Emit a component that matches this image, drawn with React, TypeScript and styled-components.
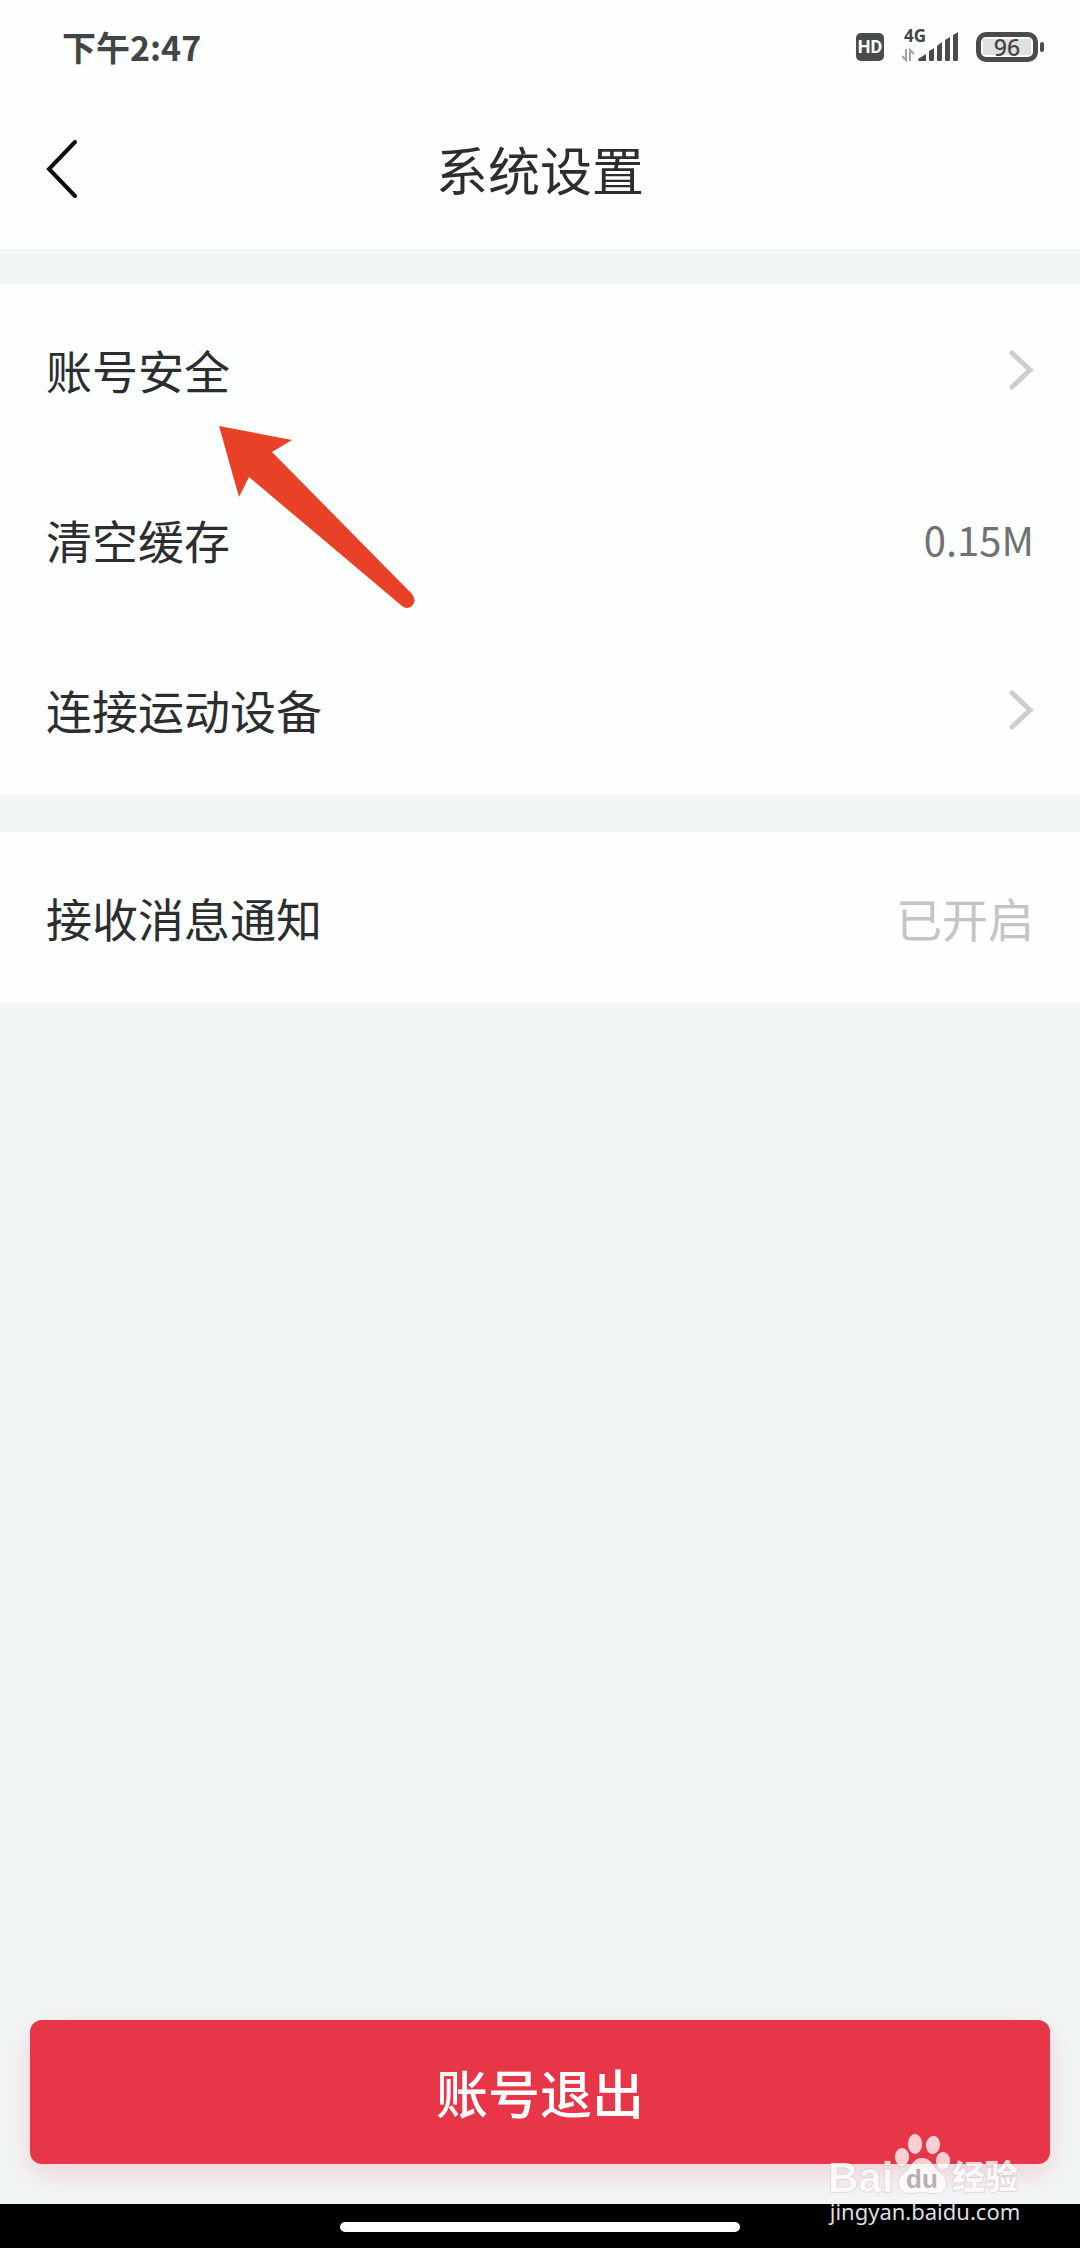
import React from "react";
import styled, { createGlobalStyle } from "styled-components";

const GlobalStyle = createGlobalStyle`
  * { box-sizing: border-box; }
  body {
    margin: 0;
    background: #f2f6f7;
    font-family: "Noto Sans CJK SC", "Noto Sans", sans-serif;
    color: #2c2d2f;
  }
  button { font: inherit; color: inherit; border: 0; background: none; padding: 0; cursor: pointer; }
`;

const Screen = styled.div`
  position: relative;
  display: flex;
  flex-direction: column;
  min-height: 100vh;
  background: #f2f6f7;
`;

const StatusBar = styled.div`
  display: flex;
  align-items: center;
  justify-content: space-between;
  height: 94px;
  padding: 0 36px 0 62px;
  background: #fdfefe;
  color: #434446;
`;

const Time = styled.time`
  font-size: 34px;
  line-height: 48px;
  font-weight: 700;
`;

const StatusIcons = styled.div`
  display: flex;
  align-items: center;
  gap: 18px;
`;

const HdBadge = styled.span`
  display: flex;
  align-items: center;
  justify-content: center;
  width: 28px;
  height: 28px;
  border-radius: 5px;
  background: #4a4b4d;
  color: #fdfefe;
  font-family: Roboto, sans-serif;
  font-size: 18px;
  line-height: 28px;
  font-weight: 700;
`;

const Signal = styled.div`
  position: relative;
  display: flex;
  height: 30px;
`;

const Network = styled.span`
  position: absolute;
  left: 2px;
  top: -6px;
  font-family: "Noto Sans", sans-serif;
  font-size: 17px;
  line-height: 20px;
  font-weight: 700;
`;

const BatteryGroup = styled.div`
  display: flex;
  align-items: center;
  gap: 2px;
`;

const Battery = styled.div`
  display: flex;
  width: 62px;
  height: 30px;
  padding: 2px;
  border: 5px solid #4a4b4d;
  border-radius: 10px;
`;

const Level = styled.span`
  flex: 1;
  display: flex;
  align-items: center;
  justify-content: center;
  background: #dfe0e1;
  font-family: "Noto Sans", sans-serif;
  font-size: 23px;
  line-height: 16px;
  font-weight: 500;
`;

const BatteryTip = styled.span`
  width: 4px;
  height: 10px;
  border-radius: 2px;
  background: #4a4b4d;
`;

const Header = styled.header`
  display: grid;
  grid-template-columns: 92px 1fr 92px;
  align-items: center;
  height: 155px;
  padding-bottom: 6px;
  background: #fdfefe;
`;

const BackButton = styled.button`
  display: flex;
  align-items: center;
  height: 92px;
  padding-left: 46px;
`;

const Title = styled.h1`
  margin: 0;
  text-align: center;
  font-size: 52px;
  line-height: 76px;
  font-weight: 400;
`;

const Main = styled.main`
  flex: 1;
  display: flex;
  flex-direction: column;
  gap: 38px;
  padding-top: 35px;
`;

const Group = styled.section`
  position: relative;
  display: flex;
  flex-direction: column;
  background: #fdfefe;
`;

const Row = styled.button`
  display: flex;
  align-items: center;
  justify-content: space-between;
  height: 170px;
  padding: 0 46px;
  text-align: left;
`;

const Label = styled.span`
  font-size: 46px;
  line-height: 68px;
`;

const Value = styled.span<{ $size: number; $color: string }>`
  font-size: ${(p) => p.$size}px;
  line-height: 68px;
  color: ${(p) => p.$color};
`;

const Pointer = styled.svg`
  position: absolute;
  left: 219px;
  top: 142px;
  pointer-events: none;
`;

const Actions = styled.footer`
  padding: 0 30px 40px;
`;

const LogoutButton = styled.button`
  width: 100%;
  height: 144px;
  border-radius: 12px;
  background: #e83649;
  color: #ffffff;
  font-size: 52px;
  line-height: 76px;
  font-weight: 500;
  box-shadow: 0 10px 30px rgba(232, 54, 73, 0.2);
`;

const NavBar = styled.div`
  display: flex;
  align-items: center;
  justify-content: center;
  height: 44px;
  padding-top: 2px;
  background: #000000;
`;

const HomePill = styled.span`
  width: 400px;
  height: 10px;
  border-radius: 5px;
  background: #ffffff;
`;

const Watermark = styled.div`
  position: absolute;
  right: 58px;
  bottom: 24px;
  width: 194px;
  pointer-events: none;
`;

const WatermarkLogo = styled.svg`
  display: block;
  overflow: visible;
`;

const WatermarkSite = styled.div`
  color: #dededf;
  font-family: "Noto Sans", sans-serif;
  font-size: 22px;
  line-height: 26px;
  text-align: center;
`;

function Chevron() {
  return (
    <svg width="26" height="42" viewBox="0 0 26 42" fill="none" stroke="#cbcdcf" strokeWidth="5" strokeLinecap="round" strokeLinejoin="miter" aria-hidden="true">
      <path d="M4 5 22 22 4 39" />
    </svg>
  );
}

export default function App() {
  return (
    <>
      <GlobalStyle />
      <Screen>
        <StatusBar>
          <Time>下午2:47</Time>
          <StatusIcons>
            <HdBadge>HD</HdBadge>
            <Signal>
              <Network>4G</Network>
              <svg width="56" height="30" viewBox="0 0 56 30" aria-hidden="true">
                <g fill="none" stroke="#a2a3a5" strokeWidth="2">
                  <path d="M4 17V28L0 24" />
                  <path d="M8 29V18L12 22" />
                </g>
                <g fill="#4a4b4d">
                  <path d="M16 27 24 22V29H17Q16 29 16 27Z" />
                  <path d="M27 19 32 16V28Q32 29 31 29H28Q27 29 27 28Z" />
                  <path d="M35 14 40 10V28Q40 29 39 29H36Q35 29 35 28Z" />
                  <path d="M43 8 48 5V28Q48 29 47 29H44Q43 29 43 28Z" />
                  <path d="M51 3 56 0V28Q56 29 55 29H52Q51 29 51 28Z" />
                </g>
              </svg>
            </Signal>
            <BatteryGroup>
              <Battery>
                <Level>96</Level>
              </Battery>
              <BatteryTip />
            </BatteryGroup>
          </StatusIcons>
        </StatusBar>
        <Header>
          <BackButton aria-label="返回">
            <svg width="32" height="58" viewBox="0 0 32 58" fill="none" stroke="#0c0d0e" strokeWidth="4" strokeLinecap="round" aria-hidden="true">
              <path d="M29 2 3 29 29 56" />
            </svg>
          </BackButton>
          <Title>系统设置</Title>
        </Header>
        <Main>
          <Group>
            <Row>
              <Label>账号安全</Label>
              <Chevron />
            </Row>
            <Row>
              <Label>清空缓存</Label>
              <Value $size={40} $color="#6f7173">0.15M</Value>
            </Row>
            <Row>
              <Label>连接运动设备</Label>
              <Chevron />
            </Row>
            <Pointer width="197" height="184" viewBox="0 0 197 184" aria-hidden="true">
              <path d="M0 0 73 14 53 26 193 168Q198 175 193 180 188 184 183 180L30 51 20 71Z" fill="#e94127" />
            </Pointer>
          </Group>
          <Group>
            <Row>
              <Label>接收消息通知</Label>
              <Value $size={46} $color="#c3c4c6">已开启</Value>
            </Row>
          </Group>
        </Main>
        <Actions>
          <LogoutButton>账号退出</LogoutButton>
        </Actions>
        <NavBar>
          <HomePill />
        </NavBar>
        <Watermark>
          <WatermarkLogo width="194" height="68" viewBox="0 0 194 68" role="img" aria-label="Baidu经验">
            <g fill="#ffffff" fillOpacity="0.76" stroke="#a08c92" strokeOpacity="0.4" strokeWidth="1" paintOrder="stroke">
              <ellipse cx="74" cy="27" rx="7" ry="9" />
              <ellipse cx="87" cy="14" rx="7" ry="10" />
              <ellipse cx="105" cy="15" rx="7" ry="9" transform="rotate(8 105 15)" />
              <ellipse cx="115" cy="31" rx="7" ry="9" />
              <path d="M94 28C102 28 105 35 110 41 116 46 120 50 118 56 116 65 105 64 94 62 83 64 73 65 71 56 69 49 73 45 79 40 84 35 86 28 94 28Z" />
              <text x="0" y="62" fontFamily="Liberation Sans, Arial, sans-serif" fontWeight="700" fontSize="42">Bai</text>
              <text x="124" y="59" fontFamily="Noto Sans CJK SC, sans-serif" fontWeight="900" fontSize="33">经验</text>
            </g>
            <text x="94" y="58" textAnchor="middle" fill="#b9afb3" fontFamily="Liberation Sans, Arial, sans-serif" fontWeight="700" fontSize="26">du</text>
          </WatermarkLogo>
          <WatermarkSite>jingyan.baidu.com</WatermarkSite>
        </Watermark>
      </Screen>
    </>
  );
}
